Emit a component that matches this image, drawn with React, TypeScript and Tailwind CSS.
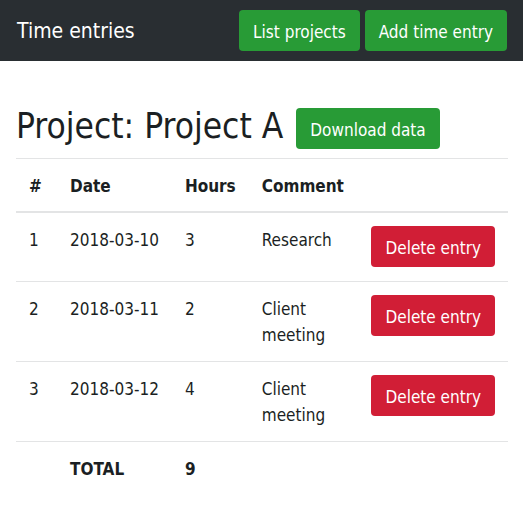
import React from "react";

type Entry = { id: number; date: string; hours: number; comment: string };

const entries: Entry[] = [
  { id: 1, date: "2018-03-10", hours: 3, comment: "Research" },
  { id: 2, date: "2018-03-11", hours: 2, comment: "Client meeting" },
  { id: 3, date: "2018-03-12", hours: 4, comment: "Client meeting" },
];

const total = entries.reduce((sum, entry) => sum + entry.hours, 0);

function Button({ variant, children }: { variant: "success" | "danger"; children: React.ReactNode }) {
  const color = variant === "success" ? "bg-[#289b36]" : "bg-[#d11e36]";
  return (
    <button
      type="button"
      className={`${color} block rounded px-3.5 pt-2.5 pb-[7px] text-[17px] leading-6 font-normal whitespace-nowrap text-white`}
    >
      {children}
    </button>
  );
}

export default function App() {
  return (
    <div className="min-h-screen bg-white font-['DejaVu_Sans_Condensed','DejaVu_Sans',sans-serif] text-[17px] leading-[26px] text-[#1b1f23]">
      <nav className="flex items-center justify-between bg-[#292e32] py-2.5 pr-4 pl-[17px]">
        <a href="#" className="text-[21px] text-white">
          Time entries
        </a>
        <div className="flex gap-[5px]">
          <Button variant="success">List projects</Button>
          <Button variant="success">Add time entry</Button>
        </div>
      </nav>
      <main className="pt-[47px] pr-[15px] pl-4">
        <div className="mb-[9px] flex items-start gap-[13px]">
          <h1 className="text-[35px] leading-9">Project: Project A</h1>
          <Button variant="success">Download data</Button>
        </div>
        <table className="w-full border-collapse text-left">
          <thead>
            <tr className="border-t border-b-2 border-[#e3e4e5] align-top">
              <th scope="col" className="w-[41px] px-[13px] pt-3.5 pb-3">#</th>
              <th scope="col" className="w-px px-[13px] pt-3.5 pb-3">Date</th>
              <th scope="col" className="w-px px-[13px] pt-3.5 pb-3">Hours</th>
              <th scope="col" className="px-[13px] pt-3.5 pb-3">Comment</th>
              <td />
            </tr>
          </thead>
          <tbody>
            {entries.map((entry) => (
              <tr key={entry.id} className="border-b border-[#e3e4e5] align-top">
                <td className="px-[13px] pt-3.5 pb-[13px]">{entry.id}</td>
                <td className="px-[13px] pt-3.5 pb-[13px] whitespace-nowrap">{entry.date}</td>
                <td className="px-[13px] pt-3.5 pb-[13px]">{entry.hours}</td>
                <td className="px-[13px] pt-3.5 pb-[13px]">{entry.comment}</td>
                <td className="w-px px-[13px] pt-[13px] pb-3.5">
                  <Button variant="danger">Delete entry</Button>
                </td>
              </tr>
            ))}
          </tbody>
          <tfoot>
            <tr className="align-top">
              <td />
              <th scope="row" className="px-[13px] pt-3.5 pb-[13px]">TOTAL</th>
              <td className="px-[13px] pt-3.5 pb-[13px] font-bold">{total}</td>
              <td />
              <td />
            </tr>
          </tfoot>
        </table>
      </main>
    </div>
  );
}
